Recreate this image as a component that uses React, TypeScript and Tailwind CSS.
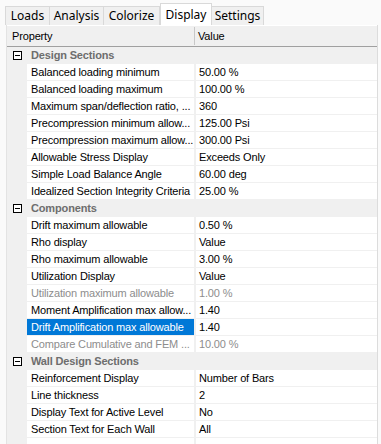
import React from 'react';

type Row =
  | { kind: 'cat'; label: string }
  | { kind: 'prop'; label: string; value: string; disabled?: boolean; selected?: boolean };

const rows: Row[] = [
  { kind: 'cat', label: 'Design Sections' },
  { kind: 'prop', label: 'Balanced loading minimum', value: '50.00 %' },
  { kind: 'prop', label: 'Balanced loading maximum', value: '100.00 %' },
  { kind: 'prop', label: 'Maximum span/deflection ratio, ...', value: '360' },
  { kind: 'prop', label: 'Precompression minimum allow...', value: '125.00 Psi' },
  { kind: 'prop', label: 'Precompression maximum allow...', value: '300.00 Psi' },
  { kind: 'prop', label: 'Allowable Stress Display', value: 'Exceeds Only' },
  { kind: 'prop', label: 'Simple Load Balance Angle', value: '60.00 deg' },
  { kind: 'prop', label: 'Idealized Section Integrity Criteria', value: '25.00 %' },
  { kind: 'cat', label: 'Components' },
  { kind: 'prop', label: 'Drift maximum allowable', value: '0.50 %' },
  { kind: 'prop', label: 'Rho display', value: 'Value' },
  { kind: 'prop', label: 'Rho maximum allowable', value: '3.00 %' },
  { kind: 'prop', label: 'Utilization Display', value: 'Value' },
  { kind: 'prop', label: 'Utilization maximum allowable', value: '1.00 %', disabled: true },
  { kind: 'prop', label: 'Moment Amplification max allow...', value: '1.40' },
  { kind: 'prop', label: 'Drift Amplification max allowable', value: '1.40', selected: true },
  { kind: 'prop', label: 'Compare Cumulative and FEM ...', value: '10.00 %', disabled: true },
  { kind: 'cat', label: 'Wall Design Sections' },
  { kind: 'prop', label: 'Reinforcement Display', value: 'Number of Bars' },
  { kind: 'prop', label: 'Line thickness', value: '2' },
  { kind: 'prop', label: 'Display Text for Active Level', value: 'No' },
  { kind: 'prop', label: 'Section Text for Each Wall', value: 'All' },
];

const tabs = [
  { name: 'Loads', w: 'w-[45px]' },
  { name: 'Analysis', w: 'w-[54px]' },
  { name: 'Colorize', w: 'w-[56px]' },
  { name: 'Display', w: 'w-[52px]', active: true },
  { name: 'Settings', w: 'w-[52px]' },
];

function MinusBox() {
  return (
    <div className="relative w-[9px] h-[9px] border border-black bg-white">
      <div className="absolute left-[1px] right-[1px] top-[3px] h-px bg-black" />
    </div>
  );
}

export default function App() {
  return (
    <div className="w-[381px] h-[444px] overflow-hidden bg-[#fafafa] font-['Liberation_Sans',Arial,sans-serif] text-[11px] tracking-[-0.15px] text-black">
      {/* tab strip */}
      <div className="flex items-end h-[25px] pl-[5px] tracking-normal">
        {tabs.map((t) =>
          t.active ? (
            <div
              key={t.name}
              className={`${t.w} h-[22px] flex items-center justify-center bg-white border border-b-0 border-[#d9d9d9] font-['Noto_Sans',sans-serif] text-[12px]`}
            >
              {t.name}
            </div>
          ) : (
            <div
              key={t.name}
              className={`${t.w} h-[19px] flex items-center justify-center bg-[#f0f0f0] border border-l-0 first:border-l border-b-0 border-[#d9d9d9] font-['Noto_Sans',sans-serif] text-[12px]`}
            >
              {t.name}
            </div>
          )
        )}
      </div>

      {/* property grid */}
      <div className="ml-[6px] w-[372px] h-[419px] border-r border-[#dcdcdc] border-l border-l-[#e3e3e3] bg-[#f0f0f0] flex flex-col">
        <div className="flex h-[22px] border-b border-[#a0a0a0] bg-[#f0f0f0] border-t border-t-white">
          <div className="w-[187px] pl-[5px] flex items-center">Property</div>
          <div className="w-px bg-[#c8c8c8] my-[1px]" />
          <div className="flex-1 pl-[3px] flex items-center">Value</div>
        </div>

        {rows.map((r) =>
          r.kind === 'cat' ? (
            <div key={r.label} className="flex h-[17px] items-center bg-[#f0f0f0]">
              <div className="w-[20px] flex justify-center pl-[1px]">
                <MinusBox />
              </div>
              <div className="pl-[4px] font-bold text-[#6d6d6d]">{r.label}</div>
            </div>
          ) : (
            <div key={r.label} className="flex h-[17px]">
              <div className="w-[20px]" />
              <div
                className={`w-[167px] pl-[4px] flex items-center whitespace-nowrap overflow-hidden border-b border-[#f0f0f0] ${
                  r.selected ? 'bg-[#0078d7] text-white' : 'bg-white'
                } ${r.disabled ? 'text-[#8d8d8d]' : ''}`}
              >
                {r.label}
              </div>
              <div className="w-[2px]" />
              <div
                className={`flex-1 pl-[3px] flex items-center bg-white border-b border-[#f0f0f0] ${
                  r.disabled ? 'text-[#8d8d8d]' : ''
                }`}
              >
                {r.value}
              </div>
            </div>
          )
        )}

        <div className="flex flex-1">
          <div className="w-[20px]" />
          <div className="w-[167px] bg-white" />
          <div className="w-[2px]" />
          <div className="flex-1 bg-white" />
        </div>
      </div>
    </div>
  );
}
